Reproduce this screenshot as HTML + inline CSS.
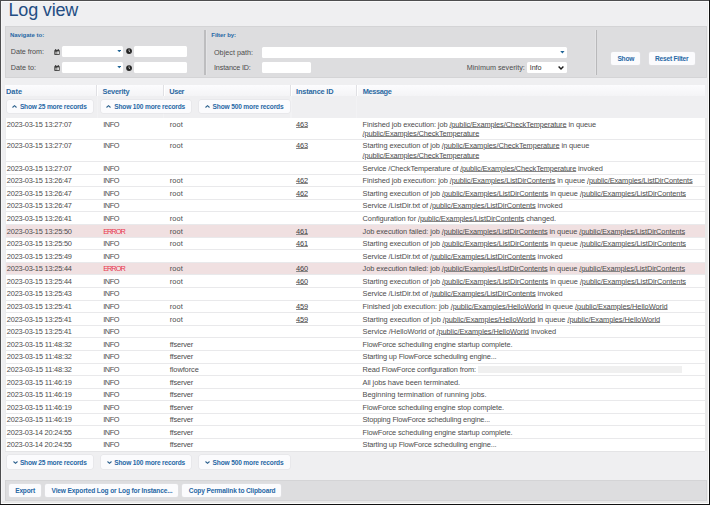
<!DOCTYPE html>
<html><head><meta charset="utf-8"><title>Log view</title>
<style>
html,body{margin:0;padding:0;}
body{width:710px;height:505px;overflow:hidden;position:relative;background:#efeff1;font-family:"Liberation Sans",sans-serif;}
body>div,body>span,body>svg{position:absolute;}
span{white-space:pre;}
u{text-decoration-thickness:0.6px;text-underline-offset:0.1px;text-decoration-color:#858585;}
</style></head><body>
<div style="left:5px;top:26px;width:702px;height:52px;background:#dddddf;border:1px solid #d4d4d6;box-sizing:border-box;"></div>
<div style="left:62.3px;top:45.8px;width:60.7px;height:10.8px;background:#fff;border-radius:1.5px;"></div>
<div style="left:133.8px;top:45.8px;width:53.5px;height:10.8px;background:#fff;border-radius:1.5px;"></div>
<div style="left:62.3px;top:62.3px;width:60.7px;height:10.6px;background:#fff;border-radius:1.5px;"></div>
<div style="left:133.8px;top:62.3px;width:53.5px;height:10.6px;background:#fff;border-radius:1.5px;"></div>
<div style="left:203.6px;top:30px;width:3px;height:44.6px;background:#e4e4e6;"></div>
<div style="left:204.3px;top:30px;width:1.6px;height:44.6px;background:#bdbdbf;"></div>
<div style="left:261.6px;top:46.9px;width:305.6px;height:10.7px;background:#fff;border-radius:1.5px;"></div>
<div style="left:261.6px;top:62.4px;width:49.8px;height:10.6px;background:#fff;border-radius:1.5px;"></div>
<div style="left:527px;top:62.3px;width:40.1px;height:10.4px;background:#fff;border-radius:1.5px;"></div>
<div style="left:595px;top:30px;width:1px;height:44.6px;background:#e3e3e5;"></div>
<div style="left:596px;top:30px;width:1.1px;height:44.6px;background:#b8b8ba;"></div>
<div style="left:611px;top:51.5px;width:29.3px;height:13.3px;background:#fbfbfd;border-radius:2px;box-shadow:0 0 0 0.5px #e2e2e6;"></div>
<div style="left:648.8px;top:51.5px;width:46px;height:13.3px;background:#fbfbfd;border-radius:2px;box-shadow:0 0 0 0.5px #e2e2e6;"></div>
<svg style="left:54.1px;top:48.8px" width="6" height="6.2" viewBox="0 0 6 6.2"><rect x="0.3" y="0.8" width="5.4" height="5.3" rx="1.1" fill="#3a3a3a"/><rect x="1.1" y="0" width="0.8" height="1.2" fill="#3a3a3a"/><rect x="3.9" y="0" width="0.8" height="1.2" fill="#3a3a3a"/><rect x="1.1" y="2.7" width="1.9" height="2.5" fill="#9a9a9a"/><rect x="3.3" y="2.4" width="1.5" height="2.8" fill="#fff"/></svg>
<svg style="left:126px;top:48.4px" width="6.1" height="6.1" viewBox="0 0 16 16"><circle cx="8" cy="8" r="7.6" fill="#222"/><path d="M8 3.5V8.3L11 10.3" stroke="#fff" stroke-width="1.8" fill="none"/></svg>
<svg style="left:116.8px;top:49.9px" width="4.5" height="2.3" viewBox="0 0 10 6"><path d="M0 0H10L5 6Z" fill="#1f6496"/></svg>
<svg style="left:54.1px;top:65.2px" width="6" height="6.2" viewBox="0 0 6 6.2"><rect x="0.3" y="0.8" width="5.4" height="5.3" rx="1.1" fill="#3a3a3a"/><rect x="1.1" y="0" width="0.8" height="1.2" fill="#3a3a3a"/><rect x="3.9" y="0" width="0.8" height="1.2" fill="#3a3a3a"/><rect x="1.1" y="2.7" width="1.9" height="2.5" fill="#9a9a9a"/><rect x="3.3" y="2.4" width="1.5" height="2.8" fill="#fff"/></svg>
<svg style="left:126px;top:64.80000000000001px" width="6.1" height="6.1" viewBox="0 0 16 16"><circle cx="8" cy="8" r="7.6" fill="#222"/><path d="M8 3.5V8.3L11 10.3" stroke="#fff" stroke-width="1.8" fill="none"/></svg>
<svg style="left:116.8px;top:66.30000000000001px" width="4.5" height="2.3" viewBox="0 0 10 6"><path d="M0 0H10L5 6Z" fill="#1f6496"/></svg>
<svg style="left:560.0px;top:51.0px" width="4.8" height="2.6" viewBox="0 0 10 6"><path d="M0 0H10L5 6Z" fill="#1f6496"/></svg>
<svg style="left:558.4px;top:66.0px" width="6" height="3.8" viewBox="0 0 10 6"><path d="M1 0.8L5 4.8L9 0.8" stroke="#1c1c1c" stroke-width="2.4" fill="none"/></svg>
<div style="left:5px;top:85.2px;width:700px;height:10.8px;background:linear-gradient(#fcfcfe,#f4f4f6);"></div>
<div style="left:96.4px;top:85.2px;width:0.8px;height:10.8px;background:#e0e0e4;"></div>
<div style="left:97.2px;top:85.2px;width:0.9px;height:10.8px;background:#ffffff;"></div>
<div style="left:96.7px;top:96px;width:1.2px;height:21.9px;background:#f2f2f4;"></div>
<div style="left:162.8px;top:85.2px;width:0.8px;height:10.8px;background:#e0e0e4;"></div>
<div style="left:163.60000000000002px;top:85.2px;width:0.9px;height:10.8px;background:#ffffff;"></div>
<div style="left:163.10000000000002px;top:96px;width:1.2px;height:21.9px;background:#f2f2f4;"></div>
<div style="left:290.1px;top:85.2px;width:0.8px;height:10.8px;background:#e0e0e4;"></div>
<div style="left:290.90000000000003px;top:85.2px;width:0.9px;height:10.8px;background:#ffffff;"></div>
<div style="left:290.40000000000003px;top:96px;width:1.2px;height:21.9px;background:#f2f2f4;"></div>
<div style="left:355.8px;top:85.2px;width:0.8px;height:10.8px;background:#e0e0e4;"></div>
<div style="left:356.6px;top:85.2px;width:0.9px;height:10.8px;background:#ffffff;"></div>
<div style="left:356.1px;top:96px;width:1.2px;height:21.9px;background:#f2f2f4;"></div>
<div style="left:6.5px;top:99.8px;width:86.6px;height:13.2px;background:#fbfbfd;border-radius:2px;box-shadow:0 0 0 0.5px #e2e2e6;"></div>
<svg style="left:12.200000000000001px;top:105.3px" width="5" height="3" viewBox="0 0 10 6"><path d="M1 5L5 1.4L9 5" stroke="#2a5f8c" stroke-width="2.1" fill="none"/></svg>
<div style="left:100.6px;top:99.8px;width:90.8px;height:13.2px;background:#fbfbfd;border-radius:2px;box-shadow:0 0 0 0.5px #e2e2e6;"></div>
<svg style="left:106.1px;top:105.3px" width="5" height="3" viewBox="0 0 10 6"><path d="M1 5L5 1.4L9 5" stroke="#2a5f8c" stroke-width="2.1" fill="none"/></svg>
<div style="left:199px;top:99.8px;width:90.6px;height:13.2px;background:#fbfbfd;border-radius:2px;box-shadow:0 0 0 0.5px #e2e2e6;"></div>
<svg style="left:204.60000000000002px;top:105.3px" width="5" height="3" viewBox="0 0 10 6"><path d="M1 5L5 1.4L9 5" stroke="#2a5f8c" stroke-width="2.1" fill="none"/></svg>
<div style="left:6.5px;top:454.6px;width:86.6px;height:14.2px;background:#fbfbfd;border-radius:2px;box-shadow:0 0 0 0.5px #e2e2e6;"></div>
<svg style="left:12.8px;top:461.1px" width="5" height="3" viewBox="0 0 10 6"><path d="M1 1L5 4.6L9 1" stroke="#2a5f8c" stroke-width="2.1" fill="none"/></svg>
<div style="left:100.6px;top:454.6px;width:90.8px;height:14.2px;background:#fbfbfd;border-radius:2px;box-shadow:0 0 0 0.5px #e2e2e6;"></div>
<svg style="left:106.7px;top:461.1px" width="5" height="3" viewBox="0 0 10 6"><path d="M1 1L5 4.6L9 1" stroke="#2a5f8c" stroke-width="2.1" fill="none"/></svg>
<div style="left:199px;top:454.6px;width:90.6px;height:14.2px;background:#fbfbfd;border-radius:2px;box-shadow:0 0 0 0.5px #e2e2e6;"></div>
<svg style="left:205.20000000000002px;top:461.1px" width="5" height="3" viewBox="0 0 10 6"><path d="M1 1L5 4.6L9 1" stroke="#2a5f8c" stroke-width="2.1" fill="none"/></svg>
<div style="left:5px;top:117.9px;width:700px;height:333.2px;background:#fff;"></div>
<div style="left:5px;top:139.3px;width:700px;height:0.7px;background:#e9e9eb;"></div>
<div style="left:5px;top:161.10000000000002px;width:700px;height:0.7px;background:#e9e9eb;"></div>
<div style="left:5px;top:173.69000000000003px;width:700px;height:0.7px;background:#e9e9eb;"></div>
<div style="left:5px;top:186.28000000000003px;width:700px;height:0.7px;background:#e9e9eb;"></div>
<div style="left:5px;top:198.87000000000003px;width:700px;height:0.7px;background:#e9e9eb;"></div>
<div style="left:5px;top:211.46000000000004px;width:700px;height:0.7px;background:#e9e9eb;"></div>
<div style="left:5px;top:224.05000000000004px;width:701px;height:12.59px;background:#f0e0e1;"></div>
<div style="left:5px;top:224.05000000000004px;width:700px;height:0.7px;background:#e9e9eb;"></div>
<div style="left:5px;top:236.64000000000004px;width:700px;height:0.7px;background:#e9e9eb;"></div>
<div style="left:5px;top:249.23000000000005px;width:700px;height:0.7px;background:#e9e9eb;"></div>
<div style="left:5px;top:261.82000000000005px;width:701px;height:12.59px;background:#f0e0e1;"></div>
<div style="left:5px;top:261.82000000000005px;width:700px;height:0.7px;background:#e9e9eb;"></div>
<div style="left:5px;top:274.41px;width:700px;height:0.7px;background:#e9e9eb;"></div>
<div style="left:5px;top:287.0px;width:700px;height:0.7px;background:#e9e9eb;"></div>
<div style="left:5px;top:299.59px;width:700px;height:0.7px;background:#e9e9eb;"></div>
<div style="left:5px;top:312.17999999999995px;width:700px;height:0.7px;background:#e9e9eb;"></div>
<div style="left:5px;top:324.7699999999999px;width:700px;height:0.7px;background:#e9e9eb;"></div>
<div style="left:5px;top:337.3599999999999px;width:700px;height:0.7px;background:#e9e9eb;"></div>
<div style="left:5px;top:349.9499999999999px;width:700px;height:0.7px;background:#e9e9eb;"></div>
<div style="left:5px;top:362.53999999999985px;width:700px;height:0.7px;background:#e9e9eb;"></div>
<div style="left:478px;top:366.4399999999998px;width:203.5px;height:6.9px;background:#f0f0f0;filter:blur(0.5px);"></div>
<div style="left:5px;top:375.1299999999998px;width:700px;height:0.7px;background:#e9e9eb;"></div>
<div style="left:5px;top:387.7199999999998px;width:700px;height:0.7px;background:#e9e9eb;"></div>
<div style="left:5px;top:400.3099999999998px;width:700px;height:0.7px;background:#e9e9eb;"></div>
<div style="left:5px;top:412.89999999999975px;width:700px;height:0.7px;background:#e9e9eb;"></div>
<div style="left:5px;top:425.4899999999997px;width:700px;height:0.7px;background:#e9e9eb;"></div>
<div style="left:5px;top:438.0799999999997px;width:700px;height:0.7px;background:#e9e9eb;"></div>
<div style="left:5px;top:479.8px;width:702px;height:21px;background:#dddddf;border:1px solid #d4d4d6;box-sizing:border-box;"></div>
<div style="left:8.5px;top:484px;width:32.7px;height:13.4px;background:#fbfbfd;border-radius:2px;box-shadow:0 0 0 0.5px #e2e2e6;"></div>
<div style="left:45.2px;top:484px;width:132.7px;height:13.4px;background:#fbfbfd;border-radius:2px;box-shadow:0 0 0 0.5px #e2e2e6;"></div>
<div style="left:182.4px;top:484px;width:98.7px;height:13.4px;background:#fbfbfd;border-radius:2px;box-shadow:0 0 0 0.5px #e2e2e6;"></div>
<div style="left:705px;top:117.9px;width:3px;height:333.2px;background:#e8e8e8;"></div>
<div style="left:707px;top:1px;width:1px;height:503px;background:#ebebeb;"></div>
<div style="left:1px;top:501px;width:707px;height:2px;background:#e8e8e8;"></div>
<div style="left:5px;top:117.9px;width:0.7px;height:333.2px;background:#ececee;"></div>
<div style="left:5px;top:450.6px;width:700px;height:0.6px;background:#e4e4e6;"></div>
<div style="left:0px;top:0px;width:710px;height:1px;background:#4d4d4f;"></div>
<div style="left:0px;top:0px;width:1px;height:505px;background:#4d4d4f;"></div>
<div style="left:709px;top:0px;width:1px;height:505px;background:#111;"></div>
<div style="left:0px;top:504px;width:710px;height:1px;background:#111;"></div>
<div style="left:1px;top:503px;width:708px;height:1px;background:#fdfdfd;"></div>
<div style="left:708px;top:1px;width:1px;height:503px;background:#fdfdfd;"></div>
<div style="left:1px;top:1px;width:708px;height:1px;background:#f9f9fa;"></div>
<div style="left:1px;top:1px;width:1px;height:502px;background:#f6f6f7;"></div>
<span style="left:8.5px;top:0.06px;font-size:18px;line-height:20px;color:#234d83;letter-spacing:-0.181px;">Log view</span>
<span style="left:9.9px;top:29.92px;font-size:6.0px;line-height:10px;color:#2868a5;letter-spacing:-0.004px;font-weight:700;">Navigate to:</span>
<span style="left:10.8px;top:46.71px;font-size:7.2px;line-height:10px;color:#4c4c4c;letter-spacing:-0.036px;">Date from:</span>
<span style="left:10.8px;top:63.41px;font-size:7.2px;line-height:10px;color:#4c4c4c;">Date to:</span>
<span style="left:211.3px;top:29.92px;font-size:6.0px;line-height:10px;color:#2868a5;letter-spacing:-0.064px;font-weight:700;">Filter by:</span>
<span style="left:214px;top:48.11px;font-size:7.2px;line-height:10px;color:#4c4c4c;letter-spacing:0.020px;">Object path:</span>
<span style="left:214px;top:63.21px;font-size:7.2px;line-height:10px;color:#4c4c4c;letter-spacing:-0.138px;">Instance ID:</span>
<span style="left:466.7px;top:62.81px;font-size:7.2px;line-height:10px;color:#4c4c4c;letter-spacing:0.016px;">Minimum severity:</span>
<span style="left:529.8px;top:62.81px;font-size:7.2px;line-height:10px;color:#333;letter-spacing:-0.100px;">Info</span>
<span style="left:617.5px;top:53.71px;font-size:6.6px;line-height:10px;color:#2868a5;letter-spacing:-0.273px;font-weight:700;">Show</span>
<span style="left:655px;top:53.71px;font-size:6.6px;line-height:10px;color:#2868a5;letter-spacing:-0.210px;font-weight:700;">Reset Filter</span>
<span style="left:6px;top:86.64px;font-size:7.4px;line-height:10px;color:#2c69a2;letter-spacing:-0.008px;font-weight:700;">Date</span>
<span style="left:102.6px;top:86.64px;font-size:7.4px;line-height:10px;color:#2c69a2;letter-spacing:-0.258px;font-weight:700;">Severity</span>
<span style="left:169.3px;top:86.64px;font-size:7.4px;line-height:10px;color:#2c69a2;letter-spacing:-0.434px;font-weight:700;">User</span>
<span style="left:296.1px;top:86.64px;font-size:7.4px;line-height:10px;color:#2c69a2;letter-spacing:-0.203px;font-weight:700;">Instance ID</span>
<span style="left:362.7px;top:86.64px;font-size:7.4px;line-height:10px;color:#2c69a2;letter-spacing:-0.333px;font-weight:700;">Message</span>
<span style="left:19.9px;top:102.31px;font-size:6.6px;line-height:10px;color:#2868a5;letter-spacing:-0.197px;font-weight:700;">Show 25 more records</span>
<span style="left:114.3px;top:102.31px;font-size:6.6px;line-height:10px;color:#2868a5;letter-spacing:-0.176px;font-weight:700;">Show 100 more records</span>
<span style="left:212.6px;top:102.31px;font-size:6.6px;line-height:10px;color:#2868a5;letter-spacing:-0.167px;font-weight:700;">Show 500 more records</span>
<span style="left:19.9px;top:458.11px;font-size:6.6px;line-height:10px;color:#2868a5;letter-spacing:-0.197px;font-weight:700;">Show 25 more records</span>
<span style="left:114.3px;top:458.11px;font-size:6.6px;line-height:10px;color:#2868a5;letter-spacing:-0.176px;font-weight:700;">Show 100 more records</span>
<span style="left:212.6px;top:458.11px;font-size:6.6px;line-height:10px;color:#2868a5;letter-spacing:-0.167px;font-weight:700;">Show 500 more records</span>
<span style="left:6.8px;top:120.04px;font-size:7.4px;line-height:10px;color:#4c4c4c;letter-spacing:-0.192px;">2023-03-15 13:27:07</span>
<span style="left:103.2px;top:120.04px;font-size:7.4px;line-height:10px;color:#4c4c4c;letter-spacing:-0.414px;">INFO</span>
<span style="left:169.8px;top:120.04px;font-size:7.4px;line-height:10px;color:#4c4c4c;letter-spacing:0.062px;">root</span>
<span style="left:296.1px;top:120.04px;font-size:7.4px;line-height:10px;color:#3c3c3c;letter-spacing:-0.181px;"><u>463</u></span>
<span style="left:362.6px;top:120.04px;font-size:7.4px;line-height:10px;color:#4c4c4c;letter-spacing:-0.099px;">Finished job execution: job <u>/public/Examples/CheckTemperature</u> in queue</span>
<span style="left:362.6px;top:129.04px;font-size:7.4px;line-height:10px;color:#4c4c4c;letter-spacing:-0.114px;"><u>/public/Examples/CheckTemperature</u></span>
<span style="left:6.8px;top:141.04px;font-size:7.4px;line-height:10px;color:#4c4c4c;letter-spacing:-0.192px;">2023-03-15 13:27:07</span>
<span style="left:103.2px;top:141.04px;font-size:7.4px;line-height:10px;color:#4c4c4c;letter-spacing:-0.414px;">INFO</span>
<span style="left:169.8px;top:141.04px;font-size:7.4px;line-height:10px;color:#4c4c4c;letter-spacing:0.062px;">root</span>
<span style="left:296.1px;top:141.04px;font-size:7.4px;line-height:10px;color:#3c3c3c;letter-spacing:-0.181px;"><u>463</u></span>
<span style="left:362.6px;top:141.04px;font-size:7.4px;line-height:10px;color:#4c4c4c;letter-spacing:-0.081px;">Starting execution of job <u>/public/Examples/CheckTemperature</u> in queue</span>
<span style="left:362.6px;top:151.04px;font-size:7.4px;line-height:10px;color:#4c4c4c;letter-spacing:-0.114px;"><u>/public/Examples/CheckTemperature</u></span>
<span style="left:6.8px;top:164.04px;font-size:7.4px;line-height:10px;color:#4c4c4c;letter-spacing:-0.192px;">2023-03-15 13:27:07</span>
<span style="left:103.2px;top:164.04px;font-size:7.4px;line-height:10px;color:#4c4c4c;letter-spacing:-0.414px;">INFO</span>
<span style="left:362.6px;top:164.04px;font-size:7.4px;line-height:10px;color:#4c4c4c;letter-spacing:-0.133px;">Service /CheckTemperature of <u>/public/Examples/CheckTemperature</u> invoked</span>
<span style="left:6.8px;top:176.04px;font-size:7.4px;line-height:10px;color:#4c4c4c;letter-spacing:-0.192px;">2023-03-15 13:26:47</span>
<span style="left:103.2px;top:176.04px;font-size:7.4px;line-height:10px;color:#4c4c4c;letter-spacing:-0.414px;">INFO</span>
<span style="left:169.8px;top:176.04px;font-size:7.4px;line-height:10px;color:#4c4c4c;letter-spacing:0.062px;">root</span>
<span style="left:296.1px;top:176.04px;font-size:7.4px;line-height:10px;color:#3c3c3c;letter-spacing:-0.181px;"><u>462</u></span>
<span style="left:362.6px;top:176.04px;font-size:7.4px;line-height:10px;color:#4c4c4c;letter-spacing:-0.088px;">Finished job execution: job <u>/public/Examples/ListDirContents</u> in queue <u>/public/Examples/ListDirContents</u></span>
<span style="left:6.8px;top:189.04px;font-size:7.4px;line-height:10px;color:#4c4c4c;letter-spacing:-0.192px;">2023-03-15 13:26:47</span>
<span style="left:103.2px;top:189.04px;font-size:7.4px;line-height:10px;color:#4c4c4c;letter-spacing:-0.414px;">INFO</span>
<span style="left:169.8px;top:189.04px;font-size:7.4px;line-height:10px;color:#4c4c4c;letter-spacing:0.062px;">root</span>
<span style="left:296.1px;top:189.04px;font-size:7.4px;line-height:10px;color:#3c3c3c;letter-spacing:-0.181px;"><u>462</u></span>
<span style="left:362.6px;top:189.04px;font-size:7.4px;line-height:10px;color:#4c4c4c;letter-spacing:-0.073px;">Starting execution of job <u>/public/Examples/ListDirContents</u> in queue <u>/public/Examples/ListDirContents</u></span>
<span style="left:6.8px;top:201.04px;font-size:7.4px;line-height:10px;color:#4c4c4c;letter-spacing:-0.192px;">2023-03-15 13:26:47</span>
<span style="left:103.2px;top:201.04px;font-size:7.4px;line-height:10px;color:#4c4c4c;letter-spacing:-0.414px;">INFO</span>
<span style="left:362.6px;top:201.04px;font-size:7.4px;line-height:10px;color:#4c4c4c;letter-spacing:-0.086px;">Service /ListDir.txt of <u>/public/Examples/ListDirContents</u> invoked</span>
<span style="left:6.8px;top:214.04px;font-size:7.4px;line-height:10px;color:#4c4c4c;letter-spacing:-0.192px;">2023-03-15 13:26:41</span>
<span style="left:103.2px;top:214.04px;font-size:7.4px;line-height:10px;color:#4c4c4c;letter-spacing:-0.414px;">INFO</span>
<span style="left:169.8px;top:214.04px;font-size:7.4px;line-height:10px;color:#4c4c4c;letter-spacing:0.062px;">root</span>
<span style="left:362.6px;top:214.04px;font-size:7.4px;line-height:10px;color:#4c4c4c;letter-spacing:-0.071px;">Configuration for <u>/public/Examples/ListDirContents</u> changed.</span>
<span style="left:6.8px;top:227.04px;font-size:7.4px;line-height:10px;color:#4c4c4c;letter-spacing:-0.192px;">2023-03-15 13:25:50</span>
<span style="left:103.2px;top:227.04px;font-size:7.4px;line-height:10px;color:#e8364c;letter-spacing:-1.041px;">ERROR</span>
<span style="left:169.8px;top:227.04px;font-size:7.4px;line-height:10px;color:#4c4c4c;letter-spacing:0.062px;">root</span>
<span style="left:296.1px;top:227.04px;font-size:7.4px;line-height:10px;color:#3c3c3c;letter-spacing:-0.181px;"><u>461</u></span>
<span style="left:362.6px;top:227.04px;font-size:7.4px;line-height:10px;color:#4c4c4c;letter-spacing:-0.083px;">Job execution failed: job <u>/public/Examples/ListDirContents</u> in queue <u>/public/Examples/ListDirContents</u></span>
<span style="left:6.8px;top:239.04px;font-size:7.4px;line-height:10px;color:#4c4c4c;letter-spacing:-0.192px;">2023-03-15 13:25:50</span>
<span style="left:103.2px;top:239.04px;font-size:7.4px;line-height:10px;color:#4c4c4c;letter-spacing:-0.414px;">INFO</span>
<span style="left:169.8px;top:239.04px;font-size:7.4px;line-height:10px;color:#4c4c4c;letter-spacing:0.062px;">root</span>
<span style="left:296.1px;top:239.04px;font-size:7.4px;line-height:10px;color:#3c3c3c;letter-spacing:-0.181px;"><u>461</u></span>
<span style="left:362.6px;top:239.04px;font-size:7.4px;line-height:10px;color:#4c4c4c;letter-spacing:-0.073px;">Starting execution of job <u>/public/Examples/ListDirContents</u> in queue <u>/public/Examples/ListDirContents</u></span>
<span style="left:6.8px;top:252.04px;font-size:7.4px;line-height:10px;color:#4c4c4c;letter-spacing:-0.192px;">2023-03-15 13:25:49</span>
<span style="left:103.2px;top:252.04px;font-size:7.4px;line-height:10px;color:#4c4c4c;letter-spacing:-0.414px;">INFO</span>
<span style="left:362.6px;top:252.04px;font-size:7.4px;line-height:10px;color:#4c4c4c;letter-spacing:-0.086px;">Service /ListDir.txt of <u>/public/Examples/ListDirContents</u> invoked</span>
<span style="left:6.8px;top:264.04px;font-size:7.4px;line-height:10px;color:#4c4c4c;letter-spacing:-0.192px;">2023-03-15 13:25:44</span>
<span style="left:103.2px;top:264.04px;font-size:7.4px;line-height:10px;color:#e8364c;letter-spacing:-1.041px;">ERROR</span>
<span style="left:169.8px;top:264.04px;font-size:7.4px;line-height:10px;color:#4c4c4c;letter-spacing:0.062px;">root</span>
<span style="left:296.1px;top:264.04px;font-size:7.4px;line-height:10px;color:#3c3c3c;letter-spacing:-0.181px;"><u>460</u></span>
<span style="left:362.6px;top:264.04px;font-size:7.4px;line-height:10px;color:#4c4c4c;letter-spacing:-0.083px;">Job execution failed: job <u>/public/Examples/ListDirContents</u> in queue <u>/public/Examples/ListDirContents</u></span>
<span style="left:6.8px;top:277.04px;font-size:7.4px;line-height:10px;color:#4c4c4c;letter-spacing:-0.192px;">2023-03-15 13:25:44</span>
<span style="left:103.2px;top:277.04px;font-size:7.4px;line-height:10px;color:#4c4c4c;letter-spacing:-0.414px;">INFO</span>
<span style="left:169.8px;top:277.04px;font-size:7.4px;line-height:10px;color:#4c4c4c;letter-spacing:0.062px;">root</span>
<span style="left:296.1px;top:277.04px;font-size:7.4px;line-height:10px;color:#3c3c3c;letter-spacing:-0.181px;"><u>460</u></span>
<span style="left:362.6px;top:277.04px;font-size:7.4px;line-height:10px;color:#4c4c4c;letter-spacing:-0.073px;">Starting execution of job <u>/public/Examples/ListDirContents</u> in queue <u>/public/Examples/ListDirContents</u></span>
<span style="left:6.8px;top:289.04px;font-size:7.4px;line-height:10px;color:#4c4c4c;letter-spacing:-0.192px;">2023-03-15 13:25:43</span>
<span style="left:103.2px;top:289.04px;font-size:7.4px;line-height:10px;color:#4c4c4c;letter-spacing:-0.414px;">INFO</span>
<span style="left:362.6px;top:289.04px;font-size:7.4px;line-height:10px;color:#4c4c4c;letter-spacing:-0.086px;">Service /ListDir.txt of <u>/public/Examples/ListDirContents</u> invoked</span>
<span style="left:6.8px;top:302.04px;font-size:7.4px;line-height:10px;color:#4c4c4c;letter-spacing:-0.192px;">2023-03-15 13:25:41</span>
<span style="left:103.2px;top:302.04px;font-size:7.4px;line-height:10px;color:#4c4c4c;letter-spacing:-0.414px;">INFO</span>
<span style="left:169.8px;top:302.04px;font-size:7.4px;line-height:10px;color:#4c4c4c;letter-spacing:0.062px;">root</span>
<span style="left:296.1px;top:302.04px;font-size:7.4px;line-height:10px;color:#3c3c3c;letter-spacing:-0.181px;"><u>459</u></span>
<span style="left:362.6px;top:302.04px;font-size:7.4px;line-height:10px;color:#4c4c4c;letter-spacing:-0.054px;">Finished job execution: job <u>/public/Examples/HelloWorld</u> in queue <u>/public/Examples/HelloWorld</u></span>
<span style="left:6.8px;top:315.04px;font-size:7.4px;line-height:10px;color:#4c4c4c;letter-spacing:-0.192px;">2023-03-15 13:25:41</span>
<span style="left:103.2px;top:315.04px;font-size:7.4px;line-height:10px;color:#4c4c4c;letter-spacing:-0.414px;">INFO</span>
<span style="left:169.8px;top:315.04px;font-size:7.4px;line-height:10px;color:#4c4c4c;letter-spacing:0.062px;">root</span>
<span style="left:296.1px;top:315.04px;font-size:7.4px;line-height:10px;color:#3c3c3c;letter-spacing:-0.181px;"><u>459</u></span>
<span style="left:362.6px;top:315.04px;font-size:7.4px;line-height:10px;color:#4c4c4c;letter-spacing:-0.047px;">Starting execution of job <u>/public/Examples/HelloWorld</u> in queue <u>/public/Examples/HelloWorld</u></span>
<span style="left:6.8px;top:327.04px;font-size:7.4px;line-height:10px;color:#4c4c4c;letter-spacing:-0.192px;">2023-03-15 13:25:41</span>
<span style="left:103.2px;top:327.04px;font-size:7.4px;line-height:10px;color:#4c4c4c;letter-spacing:-0.414px;">INFO</span>
<span style="left:362.6px;top:327.04px;font-size:7.4px;line-height:10px;color:#4c4c4c;letter-spacing:-0.053px;">Service /HelloWorld of <u>/public/Examples/HelloWorld</u> invoked</span>
<span style="left:6.8px;top:340.04px;font-size:7.4px;line-height:10px;color:#4c4c4c;letter-spacing:-0.162px;">2023-03-15 11:48:32</span>
<span style="left:103.2px;top:340.04px;font-size:7.4px;line-height:10px;color:#4c4c4c;letter-spacing:-0.414px;">INFO</span>
<span style="left:169.8px;top:340.04px;font-size:7.4px;line-height:10px;color:#4c4c4c;letter-spacing:-0.152px;">ffserver</span>
<span style="left:362.6px;top:340.04px;font-size:7.4px;line-height:10px;color:#4c4c4c;letter-spacing:-0.111px;">FlowForce scheduling engine startup complete.</span>
<span style="left:6.8px;top:352.04px;font-size:7.4px;line-height:10px;color:#4c4c4c;letter-spacing:-0.162px;">2023-03-15 11:48:32</span>
<span style="left:103.2px;top:352.04px;font-size:7.4px;line-height:10px;color:#4c4c4c;letter-spacing:-0.414px;">INFO</span>
<span style="left:169.8px;top:352.04px;font-size:7.4px;line-height:10px;color:#4c4c4c;letter-spacing:-0.152px;">ffserver</span>
<span style="left:362.6px;top:352.04px;font-size:7.4px;line-height:10px;color:#4c4c4c;letter-spacing:-0.147px;">Starting up FlowForce scheduling engine...</span>
<span style="left:6.8px;top:365.04px;font-size:7.4px;line-height:10px;color:#4c4c4c;letter-spacing:-0.162px;">2023-03-15 11:48:32</span>
<span style="left:103.2px;top:365.04px;font-size:7.4px;line-height:10px;color:#4c4c4c;letter-spacing:-0.414px;">INFO</span>
<span style="left:169.8px;top:365.04px;font-size:7.4px;line-height:10px;color:#4c4c4c;letter-spacing:-0.075px;">flowforce</span>
<span style="left:362.6px;top:365.04px;font-size:7.4px;line-height:10px;color:#4c4c4c;letter-spacing:-0.120px;">Read FlowForce configuration from:</span>
<span style="left:6.8px;top:378.04px;font-size:7.4px;line-height:10px;color:#4c4c4c;letter-spacing:-0.162px;">2023-03-15 11:46:19</span>
<span style="left:103.2px;top:378.04px;font-size:7.4px;line-height:10px;color:#4c4c4c;letter-spacing:-0.414px;">INFO</span>
<span style="left:169.8px;top:378.04px;font-size:7.4px;line-height:10px;color:#4c4c4c;letter-spacing:-0.152px;">ffserver</span>
<span style="left:362.6px;top:378.04px;font-size:7.4px;line-height:10px;color:#4c4c4c;letter-spacing:-0.068px;">All jobs have been terminated.</span>
<span style="left:6.8px;top:390.04px;font-size:7.4px;line-height:10px;color:#4c4c4c;letter-spacing:-0.162px;">2023-03-15 11:46:19</span>
<span style="left:103.2px;top:390.04px;font-size:7.4px;line-height:10px;color:#4c4c4c;letter-spacing:-0.414px;">INFO</span>
<span style="left:169.8px;top:390.04px;font-size:7.4px;line-height:10px;color:#4c4c4c;letter-spacing:-0.152px;">ffserver</span>
<span style="left:362.6px;top:390.04px;font-size:7.4px;line-height:10px;color:#4c4c4c;letter-spacing:-0.005px;">Beginning termination of running jobs.</span>
<span style="left:6.8px;top:403.04px;font-size:7.4px;line-height:10px;color:#4c4c4c;letter-spacing:-0.162px;">2023-03-15 11:46:19</span>
<span style="left:103.2px;top:403.04px;font-size:7.4px;line-height:10px;color:#4c4c4c;letter-spacing:-0.414px;">INFO</span>
<span style="left:169.8px;top:403.04px;font-size:7.4px;line-height:10px;color:#4c4c4c;letter-spacing:-0.152px;">ffserver</span>
<span style="left:362.6px;top:403.04px;font-size:7.4px;line-height:10px;color:#4c4c4c;letter-spacing:-0.116px;">FlowForce scheduling engine stop complete.</span>
<span style="left:6.8px;top:415.04px;font-size:7.4px;line-height:10px;color:#4c4c4c;letter-spacing:-0.162px;">2023-03-15 11:46:19</span>
<span style="left:103.2px;top:415.04px;font-size:7.4px;line-height:10px;color:#4c4c4c;letter-spacing:-0.414px;">INFO</span>
<span style="left:169.8px;top:415.04px;font-size:7.4px;line-height:10px;color:#4c4c4c;letter-spacing:-0.152px;">ffserver</span>
<span style="left:362.6px;top:415.04px;font-size:7.4px;line-height:10px;color:#4c4c4c;letter-spacing:-0.157px;">Stopping FlowForce scheduling engine...</span>
<span style="left:6.8px;top:428.04px;font-size:7.4px;line-height:10px;color:#4c4c4c;letter-spacing:-0.192px;">2023-03-14 20:24:55</span>
<span style="left:103.2px;top:428.04px;font-size:7.4px;line-height:10px;color:#4c4c4c;letter-spacing:-0.414px;">INFO</span>
<span style="left:169.8px;top:428.04px;font-size:7.4px;line-height:10px;color:#4c4c4c;letter-spacing:-0.152px;">ffserver</span>
<span style="left:362.6px;top:428.04px;font-size:7.4px;line-height:10px;color:#4c4c4c;letter-spacing:-0.111px;">FlowForce scheduling engine startup complete.</span>
<span style="left:6.8px;top:440.04px;font-size:7.4px;line-height:10px;color:#4c4c4c;letter-spacing:-0.192px;">2023-03-14 20:24:55</span>
<span style="left:103.2px;top:440.04px;font-size:7.4px;line-height:10px;color:#4c4c4c;letter-spacing:-0.414px;">INFO</span>
<span style="left:169.8px;top:440.04px;font-size:7.4px;line-height:10px;color:#4c4c4c;letter-spacing:-0.152px;">ffserver</span>
<span style="left:362.6px;top:440.04px;font-size:7.4px;line-height:10px;color:#4c4c4c;letter-spacing:-0.147px;">Starting up FlowForce scheduling engine...</span>
<span style="left:15.2px;top:486.31px;font-size:6.6px;line-height:10px;color:#2868a5;letter-spacing:-0.198px;font-weight:700;">Export</span>
<span style="left:51.5px;top:486.31px;font-size:6.6px;line-height:10px;color:#2868a5;letter-spacing:-0.135px;font-weight:700;">View Exported Log or Log for Instance...</span>
<span style="left:188.8px;top:486.31px;font-size:6.6px;line-height:10px;color:#2868a5;letter-spacing:-0.141px;font-weight:700;">Copy Permalink to Clipboard</span>
</body></html>
